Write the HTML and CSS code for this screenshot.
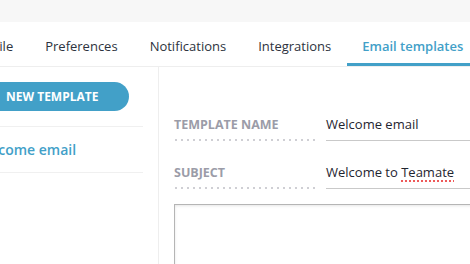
FILE: index.html
```html
<!DOCTYPE html>
<html lang="en">
<head>
  <meta charset="UTF-8" />
  <title>Settings – Email templates</title>
  <link rel="stylesheet" href="styles.css">
</head>
<body>

<div class="topbar"></div>

<div class="page">
  <nav class="tabs">
    <a class="tab" href="#">Profile</a>
    <a class="tab" href="#">Preferences</a>
    <a class="tab" href="#">Notifications</a>
    <a class="tab" href="#">Integrations</a>
    <a class="tab active" href="#">Email templates</a>
  </nav>

  <div class="content">
    <aside class="sidebar">
      <button class="new-btn">NEW TEMPLATE</button>
      <ul class="template-list">
        <li class="selected">Welcome email</li>
      </ul>
    </aside>

    <section class="editor">
      <div class="field">
        <label class="field-label">TEMPLATE NAME</label>
        <div class="field-input">Welcome email</div>
      </div>
      <div class="field">
        <label class="field-label">SUBJECT</label>
        <div class="field-input">Welcome to <span class="misspelled">Teamate</span></div>
      </div>
      <div class="body-box"></div>
    </section>
  </div>
</div>

</body>
</html>
```

FILE: styles.css
```css
* {
  margin: 0;
  padding: 0;
  box-sizing: border-box;
}

body {
  font-family: 'Open Sans', sans-serif;
  background: #fff;
  color: #2d3340;
  overflow: hidden;
}

.topbar {
  height: 22px;
  background: #f7f7f7;
}

.page {
  margin-left: -42px;
  width: 760px;
}

/* tabs */
.tabs {
  display: flex;
  border-bottom: 1px solid #eeeeee;
  height: 45px;
}

.tab {
  display: block;
  padding: 15px 16px 8px;
  font-size: 13px;
  line-height: 18px;
  color: #2d3340;
  text-decoration: none;
  border-bottom: 3px solid transparent;
}

.tab.active {
  color: #42a0c8;
  font-weight: 600;
  padding: 15px 15px 8px;
  border-bottom-color: #42a0c8;
}

/* layout */
.content {
  display: flex;
  min-height: 220px;
}

.sidebar {
  width: 201px;
  padding: 15px 15px 0 15px;
  border-right: 1px solid #eeeeee;
}

.new-btn {
  display: block;
  width: 156px;
  height: 29px;
  border: none;
  border-radius: 0 15px 15px 0;
  background: #42a0c8;
  color: #fff;
  font-family: 'Open Sans', sans-serif;
  font-weight: 700;
  font-size: 12px;
  text-align: left;
  padding-left: 33px;
}

.template-list {
  list-style: none;
  margin-top: 15px;
  border-top: 1px solid #f0f0f0;
}

.template-list li {
  height: 46px;
  line-height: 45px;
  font-size: 14px;
  font-weight: 600;
  color: #42a0c8;
  border-bottom: 1px solid #f0f0f0;
}

/* editor */
.editor {
  flex: 1;
  padding: 41px 0 0 15px;
}

.field {
  display: grid;
  grid-template-columns: 142px 1fr;
  column-gap: 10px;
  padding-top: 8px;
  margin-bottom: 15px;
}

.field-label {
  font-size: 12.5px;
  font-weight: 700;
  line-height: 17px;
  color: #9b9ca8;
  padding-bottom: 6px;
  background-image: linear-gradient(to right, #cfcfd4 2px, transparent 2px);
  background-size: 6px 2px;
  background-repeat: repeat-x;
  background-position: 1px bottom;
  height: 25px;
}

.field-input {
  font-size: 13px;
  line-height: 16px;
  color: #1f2530;
  border-bottom: 1px solid #c9c9c9;
  padding-bottom: 8px;
  height: 25px;
}

.misspelled {
  text-decoration: underline dotted #ee5a5a 2px;
  text-underline-offset: 3px;
}

.body-box {
  height: 120px;
  border: 1px solid #b5b5b5;
  box-shadow: inset 0 1px 3px rgba(0, 0, 0, 0.1);
}
```
